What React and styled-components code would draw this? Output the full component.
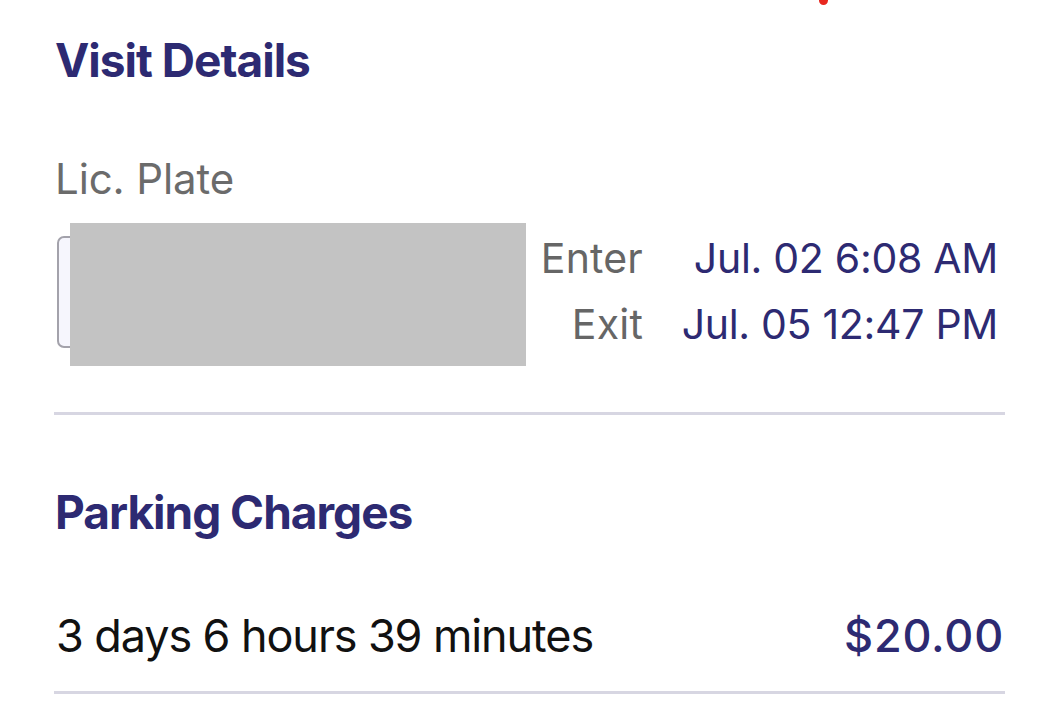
import React from 'react';
import styled, {createGlobalStyle} from 'styled-components';

const GlobalStyle = createGlobalStyle`
  body {
    margin: 0;
    background: #ffffff;
    font-family: Inter, "Liberation Sans", sans-serif;
  }
`;

const Page = styled.div`
  width: 1058px;
  height: 708px;
  overflow: hidden;
  box-sizing: border-box;
  padding: 0 53px 0 54px;
  display: flex;
  flex-direction: column;
`;

const TopEdge = styled.div`
  position: relative;
  height: 0;
`;

const RedMark = styled.span`
  position: absolute;
  top: -4px;
  left: 765px;
  width: 9px;
  height: 9px;
  border-radius: 50%;
  background: #e8281f;
`;

const Heading = styled.h2`
  margin: ${p => p.top}px 0 0 1px;
  font-size: 46px;
  line-height: 50px;
  font-weight: 700;
  letter-spacing: -1px;
  color: #2d2a72;
`;

const Label = styled.div`
  margin: 71px 0 0 1px;
  font-size: 42px;
  line-height: 46px;
  color: #6b6b6b;
  letter-spacing: -0.1px;
`;

const PlateRow = styled.div`
  display: flex;
  align-items: flex-start;
  margin-top: 21px;
  height: 143px;
`;

const Plate = styled.div`
  position: relative;
  width: 468px;
  height: 143px;
  flex-shrink: 0;
`;

const PlateFrame = styled.div`
  position: absolute;
  left: 3px;
  top: 13px;
  width: 200px;
  height: 112px;
  box-sizing: border-box;
  border: 2px solid #a3a2ab;
  border-radius: 7px;
  background: #f6f6fd;
`;

const Redaction = styled.div`
  position: absolute;
  left: 16px;
  top: 0;
  width: 456px;
  height: 143px;
  background: #c3c3c3;
`;

const Times = styled.div`
  flex: 1;
  display: grid;
  grid-template-columns: 121px 1fr;
  row-gap: 20px;
  margin-top: 12px;
  padding-right: 7px;
  white-space: nowrap;
`;

const TimeLabel = styled.span`
  justify-self: end;
  font-size: 41px;
  line-height: 46px;
  letter-spacing: 0.2px;
  color: #666666;
`;

const TimeValue = styled.span`
  justify-self: end;
  font-size: 41px;
  line-height: 46px;
  letter-spacing: -0.3px;
  color: #2d2a72;
`;

const Divider = styled.hr`
  margin: ${p => p.top}px 0 0;
  border: none;
  height: 3px;
  background: #d7d6e2;
`;

const ChargeRow = styled.div`
  display: flex;
  justify-content: space-between;
  align-items: baseline;
  margin: 74px 0 0 2px;
  padding-right: 1px;
`;

const Duration = styled.span`
  font-size: 45px;
  line-height: 50px;
  letter-spacing: -1.1px;
  color: #111111;
`;

const Amount = styled.span`
  font-size: 45px;
  line-height: 50px;
  letter-spacing: 0.8px;
  font-weight: 500;
  color: #2d2a72;
`;

export default function App() {
  return (
    <>
      <GlobalStyle />
      <Page>
        <TopEdge>
          <RedMark />
        </TopEdge>
        <Heading top={35}>Visit Details</Heading>
        <Label>Lic. Plate</Label>
        <PlateRow>
          <Plate>
            <PlateFrame />
            <Redaction />
          </Plate>
          <Times>
            <TimeLabel>Enter</TimeLabel>
            <TimeValue>Jul. 02 6:08 AM</TimeValue>
            <TimeLabel>Exit</TimeLabel>
            <TimeValue>Jul. 05 12:47 PM</TimeValue>
          </Times>
        </PlateRow>
        <Divider top={46} />
        <Heading top={72}>Parking Charges</Heading>
        <ChargeRow>
          <Duration>3 days 6 hours 39 minutes</Duration>
          <Amount>$20.00</Amount>
        </ChargeRow>
        <Divider top={30} />
      </Page>
    </>
  );
}
